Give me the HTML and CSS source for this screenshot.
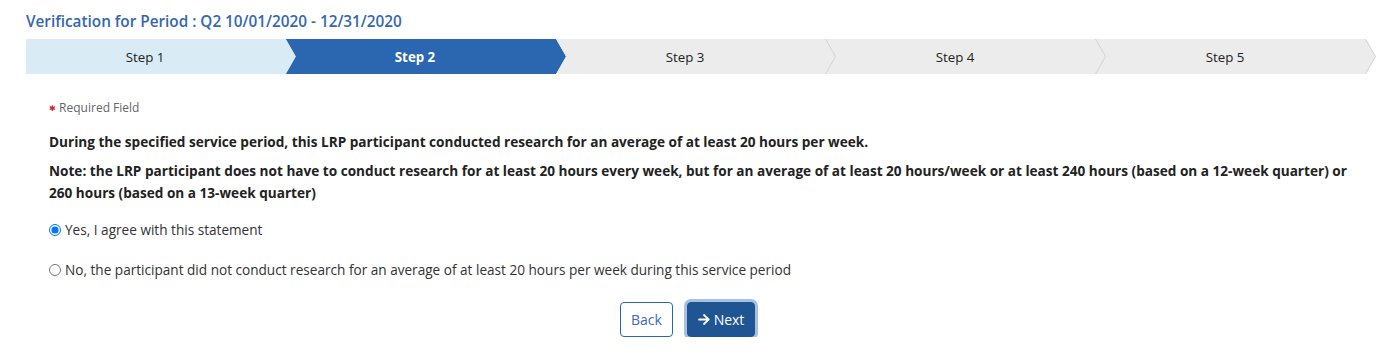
FILE: index.html
```html
<!DOCTYPE html>
<html lang="en">
<head>
<meta charset="utf-8">
<title>Verification for Period</title>
<link rel="stylesheet" href="styles.css">
</head>
<body>
<div class="page">
  <h1 class="title">Verification for Period : Q2 10/01/2020 - 12/31/2020</h1>
  <ol class="steps">
    <li class="step done"><span class="step-in">Step 1</span></li>
    <li class="step active"><span class="step-in">Step 2</span></li>
    <li class="step todo"><span class="step-in">Step 3</span></li>
    <li class="step todo"><span class="step-in">Step 4</span></li>
    <li class="step todo"><span class="step-in">Step 5</span></li>
  </ol>
  <form class="form">
    <div class="required"><span class="star">&#x2731;</span> Required Field</div>
    <p class="stmt">During the specified service period, this LRP participant conducted research for an average of at least 20 hours per week.</p>
    <p class="note">Note: the LRP participant does not have to conduct research for at least 20 hours every week, but for an average of at least 20 hours/week or at least 240 hours (based on a 12-week quarter) or 260 hours (based on a 13-week quarter)</p>
    <label class="radio r1"><input type="radio" name="agree" checked> Yes, I agree with this statement</label>
    <label class="radio r2"><input type="radio" name="agree"> No, the participant did not conduct research for an average of at least 20 hours per week during this service period</label>
    <div class="actions">
      <button type="button" class="btn btn-back">Back</button>
      <button type="button" class="btn btn-next"><svg class="arrow" viewBox="0 0 448 512" width="12" height="13"><path fill="#fff" d="M190.5 66.9l22.2-22.2c9.4-9.4 24.6-9.4 33.9 0L441 239c9.4 9.4 9.4 24.600 0 33.9L246.6 467.3c-9.4 9.4-24.6 9.4-33.9 0l-22.2-22.2c-9.5-9.5-9.3-25 .4-34.3L311.4 296H24c-13.3 0-24-10.7-24-24v-32c0-13.3 10.7-24 24-24h287.4L190.9 101.2c-9.8-9.3-10-24.8-.4-34.3z"/></svg>Next</button>
    </div>
  </form>
</div>
</body>
</html>
```
FILE: styles.css
```css
* { box-sizing: border-box; }
html, body { margin: 0; padding: 0; background: #fff; }
body {
  font-family: "Open Sans", "Liberation Sans", sans-serif;
  color: #222;
  font-size: 13px;
}
.page { padding: 9px 14px 0 26px; }
.title {
  margin: 0;
  font-size: 15.3px;
  font-weight: 600;
  line-height: 24px;
  color: #3467b0;
}
.steps {
  list-style: none;
  margin: 6px 0 0;
  padding: 0;
  display: flex;
  width: 1350px;
  height: 35px;
  overflow: hidden;
}
.step {
  flex: 0 0 280px;
  margin-left: -10px;
  height: 35px;
  clip-path: polygon(0 0, calc(100% - 10px) 0, 100% 50%, calc(100% - 10px) 100%, 0 100%, 10px 50%);
}
.step-in {
  display: flex;
  align-items: center;
  justify-content: center;
  height: 35px;
  padding-right: 22px;
  font-size: 13.3px;
  color: #222;
  clip-path: polygon(0 0, calc(100% - 10px) 0, 100% 50%, calc(100% - 10px) 100%, 0 100%, 10px 50%);
}
.done, .done .step-in { background: #d9ebf5; }
.active, .active .step-in { background: #2a67b0; }
.active .step-in { color: #fff; font-weight: 700; }
.todo { background: #d2d2d2; }
.todo .step-in { background: #ececec; width: calc(100% - 1px); padding-right: 21px; }

.form { padding: 25px 14px 0 23px; }
.required {
  font-size: 12px;
  line-height: 18px;
  color: #666;
}
.star { color: #d0243c; font-size: 8px; vertical-align: 1px; }
.stmt, .note {
  margin: 0;
  font-size: 13.6px;
  font-weight: 700;
  line-height: 22px;
  color: #222;
}
.stmt { margin-top: 14px; }
.note { margin-top: 7px; }
.radio {
  display: flex;
  align-items: center;
  font-size: 13.6px;
  line-height: 22px;
  color: #333;
}
.radio input {
  margin: 0 4px 0 0;
  width: 12px;
  height: 12px;
}
.r1 { margin-top: 15px; }
.r2 { margin-top: 18px; }
.actions {
  display: flex;
  justify-content: center;
  gap: 14px;
  margin-top: 21px;
  padding-right: 36px;
}
.btn {
  font-family: inherit;
  font-size: 14px;
  height: 35px;
  border-radius: 4px;
  padding: 0 12px;
  display: flex;
  align-items: center;
  cursor: pointer;
}
.btn-back {
  background: #fff;
  border: 1px solid #2a67b0;
  color: #3a6cb4;
  width: 53px;
  justify-content: center;
  padding: 0;
}
.btn-next {
  background: #1f5592;
  border: 1px solid #1f5592;
  color: #fff;
  width: 68px;
  justify-content: center;
  padding: 0;
  gap: 4px;
  box-shadow: 0 0 0 3px #a8c0e2;
}
.arrow { display: block; }
```
